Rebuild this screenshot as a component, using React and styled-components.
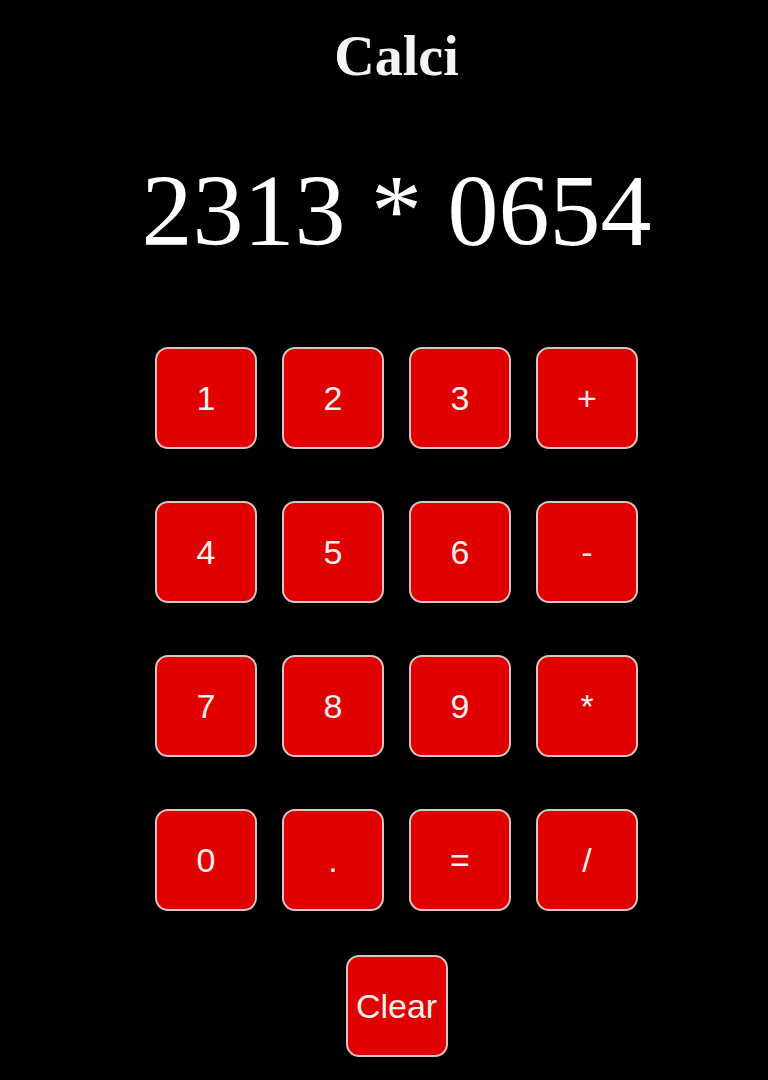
import React from "react";
import styled, { createGlobalStyle } from "styled-components";

const Global = createGlobalStyle`
  html, body { margin: 0; padding: 0; background: #000; }
  body { font-family: "Liberation Serif", "Times New Roman", serif; }
`;

const Page = styled.main`
  min-height: 1080px;
  background: #000;
  box-sizing: border-box;
  padding: 24px 0 0 25px;
  display: flex;
  flex-direction: column;
  align-items: center;
`;

const Title = styled.h1`
  margin: 0;
  font-family: "Liberation Serif", "Times New Roman", serif;
  font-weight: 700;
  font-size: 56px;
  line-height: 64px;
  color: #f4f4f4;
`;

const Display = styled.div`
  margin-top: 63px;
  font-family: "Liberation Serif", "Times New Roman", serif;
  font-size: 102px;
  line-height: 120px;
  color: #fff;
  white-space: pre;
`;

const Keypad = styled.div`
  margin-top: 76px;
  display: grid;
  grid-template-columns: repeat(4, 102px);
  column-gap: 25px;
  row-gap: 52px;
`;

const Key = styled.button`
  box-sizing: border-box;
  width: 102px;
  height: 102px;
  padding: 0;
  background: #e10000;
  border: 2px solid #d9c4c6;
  border-radius: 13px;
  color: #f7eef0;
  font-family: "Liberation Sans", Arial, sans-serif;
  font-size: 34px;
  display: flex;
  align-items: center;
  justify-content: center;
  cursor: pointer;
  white-space: nowrap;
`;

const ClearRow = styled.div`
  margin-top: 44px;
  display: flex;
  justify-content: center;
`;

const keys = ["1", "2", "3", "+", "4", "5", "6", "-", "7", "8", "9", "*", "0", ".", "=", "/"];

export default function App() {
  return (
    <>
      <Global />
      <Page>
        <Title>Calci</Title>
        <Display>2313 * 0654</Display>
        <Keypad>
          {keys.map((k) => (
            <Key key={k}>{k}</Key>
          ))}
        </Keypad>
        <ClearRow>
          <Key>Clear</Key>
        </ClearRow>
      </Page>
    </>
  );
}
